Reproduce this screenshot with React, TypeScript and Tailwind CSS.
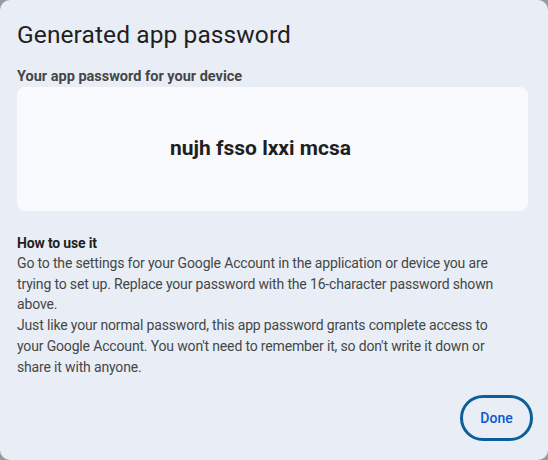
import React from 'react';

const sans = { fontFamily: 'Roboto, "Open Sans", sans-serif' };

export default function App() {
  return (
    <div className="w-[548px] h-[460px] bg-[#9a9a9a] overflow-hidden">
      <div
        className="w-full h-full bg-[#e9eef6] rounded-[10px] flex flex-col px-[17px] pt-[19px] text-[#1f1f1f]"
        style={sans}
      >
        <h1 className="text-[24.5px] leading-[32px] font-normal tracking-[0.1px]">
          Generated app password
        </h1>
        <p className="mt-[16px] text-[14.5px] leading-[20px] font-bold text-[#444746]">
          Your app password for your device
        </p>
        <div className="mt-0 h-[124px] w-[511px] rounded-[8px] bg-[#f8fafd] flex items-center justify-center pr-[24px]">
          <span className="text-[21px] font-bold text-[#1f1f1f]">nujh fsso lxxi mcsa</span>
        </div>
        <div className="mt-[22px] max-w-[490px] text-[14px] leading-[20.8px] tracking-[-0.16px] text-[#444746]">
          <p className="font-bold text-[#1f1f1f] mb-[-1px]">How to use it</p>
          <p>
            Go to the settings for your Google Account in the application or device you are trying to set up. Replace your password with the 16-character password shown above.
          </p>
          <p>
            Just like your normal password, this app password grants complete access to your Google Account. You won't need to remember it, so don't write it down or share it with anyone.
          </p>
        </div>
        <div className="mt-auto mb-[19px] flex justify-end">
          <button className="w-[73px] h-[46px] -mr-[2px] rounded-full border-[3px] border-[#0a5f99] text-[#0b57d0] text-[14px] font-medium">
            Done
          </button>
        </div>
      </div>
    </div>
  );
}
